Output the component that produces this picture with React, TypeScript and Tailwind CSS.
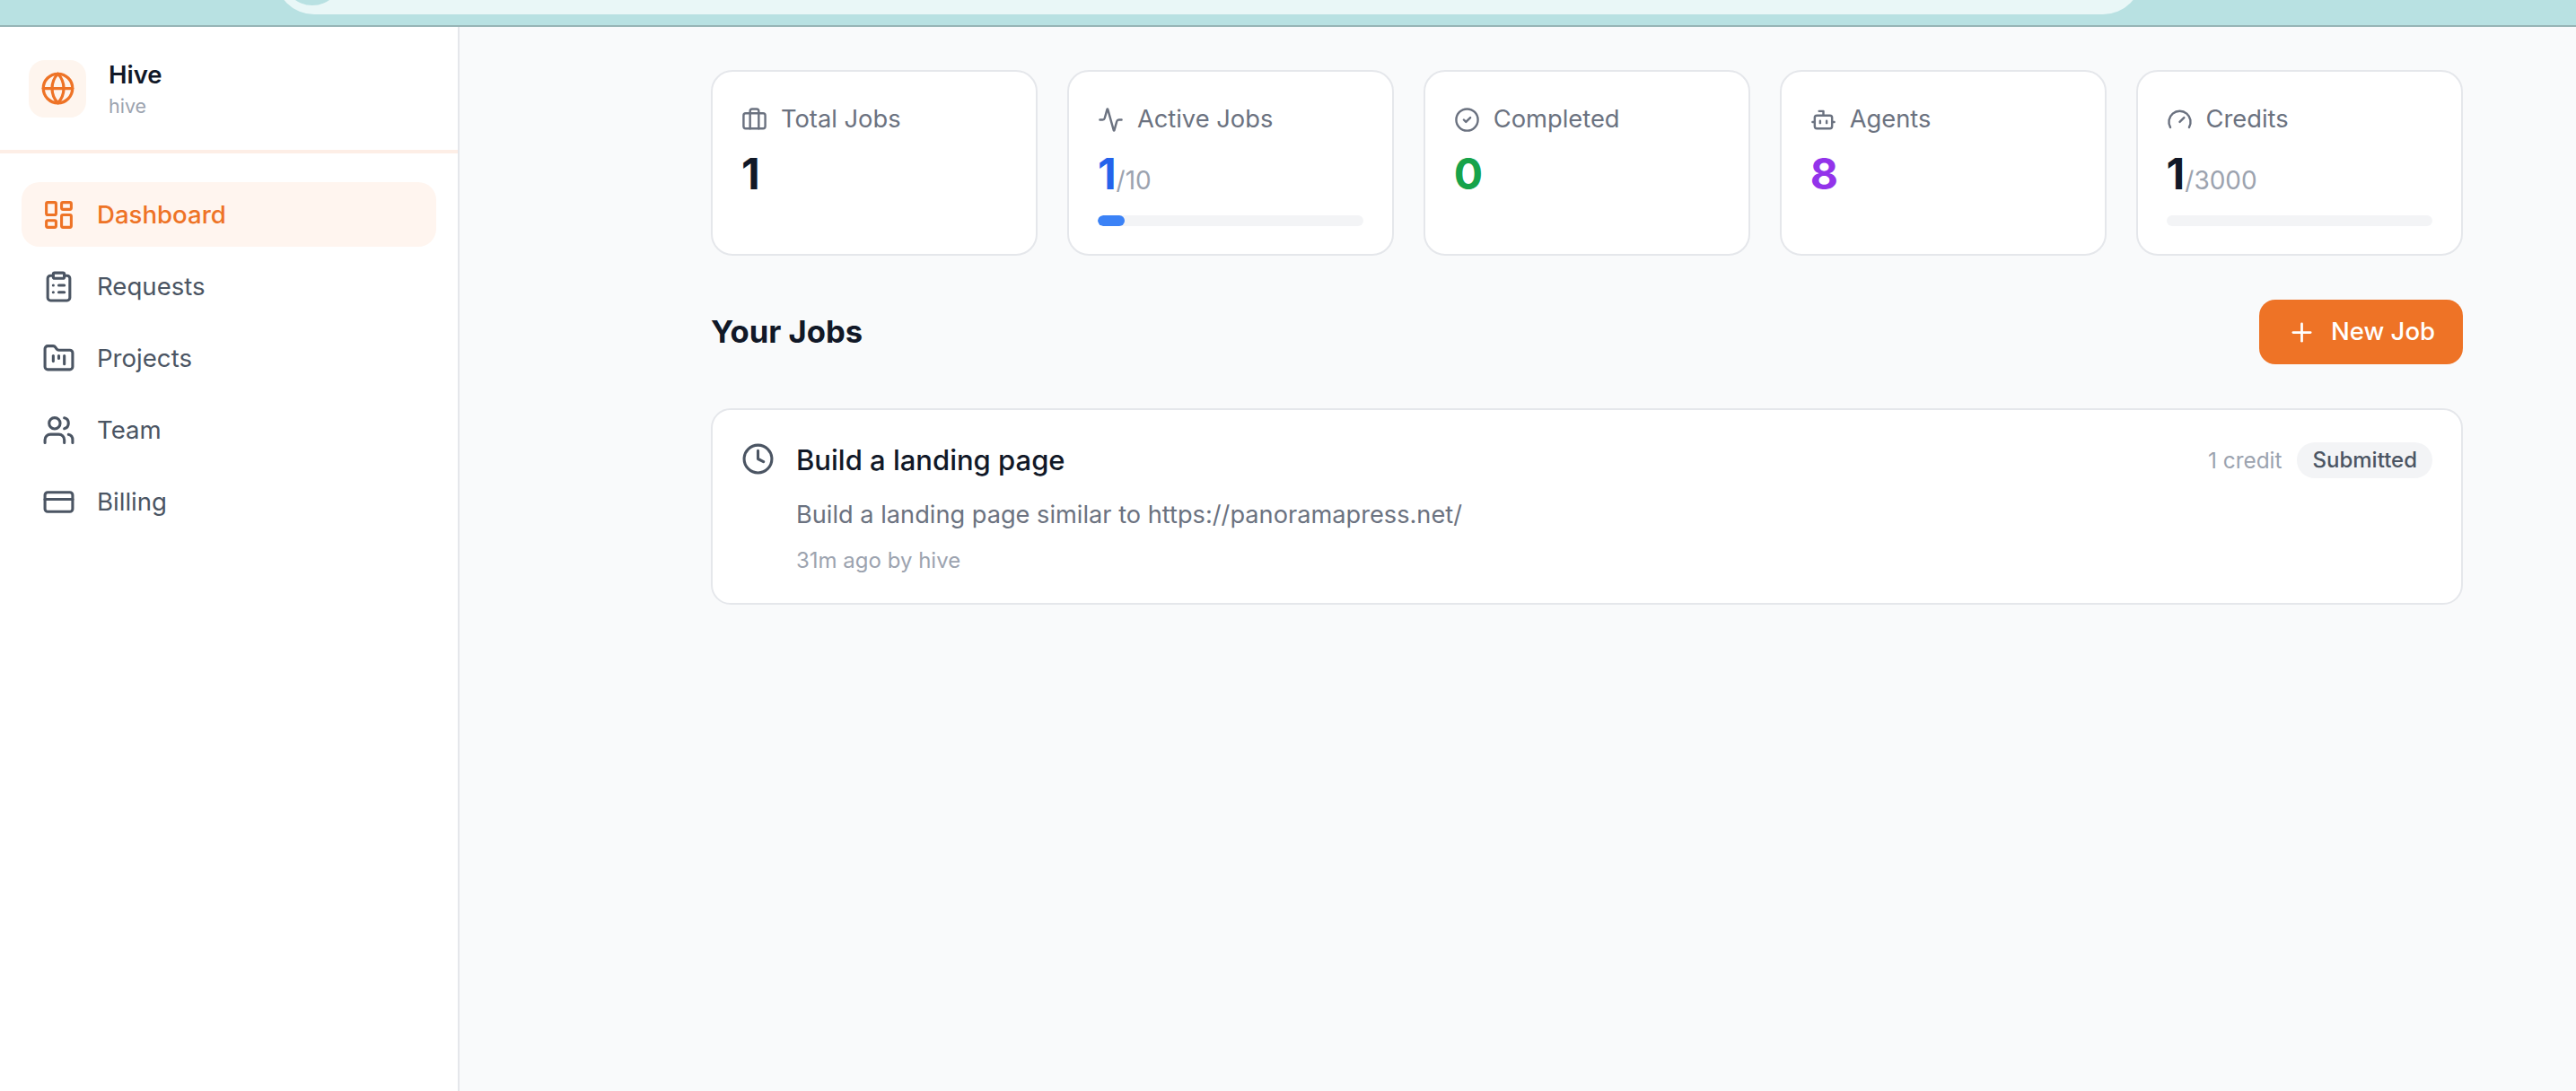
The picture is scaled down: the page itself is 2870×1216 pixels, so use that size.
import { Activity, Bot, Briefcase, CircleCheck, Clock, ClipboardList, CreditCard, FolderKanban, Gauge, Globe, LayoutDashboard, Plus, Users } from "lucide-react";

const navItems = [
  { label: "Dashboard", icon: LayoutDashboard, active: true },
  { label: "Requests", icon: ClipboardList },
  { label: "Projects", icon: FolderKanban },
  { label: "Team", icon: Users },
  { label: "Billing", icon: CreditCard },
];

const stats = [
  { label: "Total Jobs", icon: Briefcase, value: "1", color: "text-[#111827]" },
  { label: "Active Jobs", icon: Activity, value: "1", color: "text-[#2563eb]", max: "/10", pct: 10 },
  { label: "Completed", icon: CircleCheck, value: "0", color: "text-[#16a34a]" },
  { label: "Agents", icon: Bot, value: "8", color: "text-[#9333ea]" },
  { label: "Credits", icon: Gauge, value: "1", color: "text-[#111827]", max: "/3000", pct: 0 },
];

const App = () => {
  return (
    <div className="flex h-screen w-full flex-col overflow-hidden bg-[#f9fafb] font-['Inter',sans-serif]">
      {/* browser chrome cut off at the top */}
      <div className="h-[30px] shrink-0 overflow-hidden border-b-2 border-[#96b4b6] bg-[#b8e1e2] pl-[307px] pr-[484px]">
        <div className="-mt-[70px] flex h-[86px] items-center rounded-[43px] bg-[#e9f7f7] pl-[8px]">
          <div className="h-[66px] w-[66px] rounded-full bg-[#b8e1e2]" />
        </div>
      </div>

      <div className="flex min-h-0 flex-1">
        <aside className="w-[512px] shrink-0 border-r-2 border-[#e5e7eb] bg-white">
          <div className="flex h-[141px] items-center gap-[25px] border-b-4 border-[#fdeee6] pl-[32px]">
            <div className="flex h-[64px] w-[64px] items-center justify-center rounded-[18px] bg-[#fef5ee]">
              <Globe size={39} strokeWidth={2} className="text-[#ee7326]" />
            </div>
            <div>
              <h1 className="text-[27.5px] leading-[38px] font-semibold text-[#111827]">Hive</h1>
              <p className="text-[21.5px] leading-[32px] text-[#9ca3af]">hive</p>
            </div>
          </div>

          <nav className="flex flex-col gap-[8px] px-[24px] pt-[32px]">
            {navItems.map((item) => (
              <a
                key={item.label}
                className={`flex h-[72px] items-center gap-[24px] rounded-[20px] pl-[23px] text-[27.6px] ${item.active ? "bg-[#fff5ef] font-medium text-[#ee7326]" : "text-[#4b5563]"}`}
              >
                <item.icon size={37} strokeWidth={2} />
                <span className="pt-[1px]">{item.label}</span>
              </a>
            ))}
          </nav>
        </aside>

        <main className="flex-1 pt-[48px] pl-[280px] pr-[126px]">
          <div className="grid grid-cols-5 gap-[32.5px]">
            {stats.map((stat) => (
              <div key={stat.label} className="h-[207px] rounded-[24px] border-2 border-[#e5e7eb] bg-white px-[32px] pt-[38px]">
                <div className="flex items-center gap-[15px] text-[27.3px] leading-[30px] text-[#6b7280]">
                  <stat.icon size={29} strokeWidth={2} />
                  {stat.label}
                </div>
                <div className="mt-[16px] flex h-[60px] items-baseline">
                  <span className={`text-[48px] leading-[60px] font-bold ${stat.color}`}>{stat.value}</span>
                  {stat.max && <span className="text-[28px] text-[#9ca3af]">{stat.max}</span>}
                </div>
                {stat.max && (
                  <div className="mt-[16px] h-[12px] overflow-hidden rounded-full bg-[#f3f4f6]">
                    <div className="h-full rounded-full bg-[#3b82f6]" style={{ width: `${stat.pct}%` }} />
                  </div>
                )}
              </div>
            ))}
          </div>

          <div className="mt-[49px] flex h-[72px] items-center justify-between">
            <h2 className="text-[34.6px] font-bold text-[#111827]">Your Jobs</h2>
            <button className="flex h-[72px] w-[227px] items-center justify-center gap-[16px] rounded-[18px] bg-[#ee7326] text-[27.5px] font-medium text-white">
              <Plus size={33} strokeWidth={2} />
              New Job
            </button>
          </div>

          <div className="mt-[49px] flex h-[219px] gap-[24px] rounded-[22px] border-2 border-[#e5e7eb] bg-white px-[32px] pt-[36px]">
            <Clock size={37} strokeWidth={2} className="shrink-0 text-[#4b5563]" />
            <div className="flex-1">
              <div className="flex items-center justify-between">
                <h3 className="text-[31px] leading-[38px] font-medium text-[#111827]">Build a landing page</h3>
                <div className="flex items-center gap-[17px]">
                  <span className="text-[24.4px] text-[#9ca3af]">1 credit</span>
                  <span className="flex h-[40px] items-center rounded-full bg-[#f3f4f6] px-[17px] text-[24px] font-medium text-[#4b5563]">Submitted</span>
                </div>
              </div>
              <p className="mt-[21px] text-[27.2px] leading-[40px] text-[#6b7280]">Build a landing page similar to https://panoramapress.net/</p>
              <p className="mt-[16px] text-[24px] leading-[30px] text-[#9ca3af]">31m ago by hive</p>
            </div>
          </div>
        </main>
      </div>
    </div>
  );
};

export default App;
